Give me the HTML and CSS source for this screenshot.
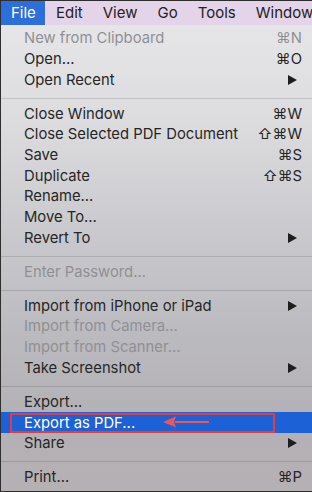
FILE: index.html
```html
<!DOCTYPE html>
<html lang="en">
<head>
	<meta charset="UTF-8">
	<title>File menu</title>
	<link rel="stylesheet" href="styles.css">
</head>
<body>
	<div class="frame">
		<div class="menubar">
			<span class="title on">File</span>
			<span class="title">Edit</span>
			<span class="title">View</span>
			<span class="title">Go</span>
			<span class="title">Tools</span>
			<span class="title">Window</span>
		</div>
		<div class="menu">
			<div class="row off"><span class="label">New from Clipboard</span><span class="key">⌘N</span></div>
			<div class="row"><span class="label">Open...</span><span class="key">⌘O</span></div>
			<div class="row"><span class="label">Open Recent</span><span class="sub"><svg width="9" height="10" viewBox="0 0 9 10"><path d="M0 0L9 5L0 10Z"/></svg></span></div>
			<div class="sep"></div>
			<div class="row"><span class="label">Close Window</span><span class="key">⌘W</span></div>
			<div class="row"><span class="label">Close Selected PDF Document</span><span class="key">⇧⌘W</span></div>
			<div class="row"><span class="label">Save</span><span class="key">⌘S</span></div>
			<div class="row"><span class="label">Duplicate</span><span class="key">⇧⌘S</span></div>
			<div class="row"><span class="label">Rename...</span></div>
			<div class="row"><span class="label">Move To...</span></div>
			<div class="row"><span class="label">Revert To</span><span class="sub"><svg width="9" height="10" viewBox="0 0 9 10"><path d="M0 0L9 5L0 10Z"/></svg></span></div>
			<div class="sep"></div>
			<div class="row off"><span class="label">Enter Password...</span></div>
			<div class="sep"></div>
			<div class="row"><span class="label">Import from iPhone or iPad</span><span class="sub"><svg width="9" height="10" viewBox="0 0 9 10"><path d="M0 0L9 5L0 10Z"/></svg></span></div>
			<div class="row off"><span class="label">Import from Camera...</span></div>
			<div class="row off"><span class="label">Import from Scanner...</span></div>
			<div class="row"><span class="label">Take Screenshot</span><span class="sub"><svg width="9" height="10" viewBox="0 0 9 10"><path d="M0 0L9 5L0 10Z"/></svg></span></div>
			<div class="sep"></div>
			<div class="row"><span class="label">Export...</span></div>
			<div class="row hi">
				<span class="label">Export as PDF...</span>
				<div class="mark"></div>
				<svg class="pointer" width="48" height="12" viewBox="0 0 48 12"><path d="M12 5H46V7H12Z M0 6L13 0.5L11 6L13 11.5Z" fill="#ec5656"/></svg>
			</div>
			<div class="row"><span class="label">Share</span><span class="sub"><svg width="9" height="10" viewBox="0 0 9 10"><path d="M0 0L9 5L0 10Z"/></svg></span></div>
			<div class="sep"></div>
			<div class="row"><span class="label">Print...</span><span class="key">⌘P</span></div>
		</div>
	</div>
</body>
</html>
```
FILE: styles.css
```css
*{
	margin: 0;
	padding: 0;
	box-sizing: border-box;
}
body{
	font-family: Inter, "Liberation Sans", "DejaVu Sans", sans-serif;
	background: #fff;
}
.frame{
	width: 312px;
	height: 492px;
	border: 1px solid #2e2e2e;
	border-right: none;
	overflow: hidden;
	background: linear-gradient(180deg, #e8e8eb 0%, #dcdcdf 25%, #c9c9cd 48%, #bbbabf 68%, #b3b1b6 85%, #b6b0b3 100%);
}
.menubar{
	height: 24px;
	display: flex;
	align-items: center;
	background: #e3d4ea;
	color: #222;
	font-size: 15px;
	white-space: nowrap;
}
.title{
	height: 24px;
	line-height: 24px;
	padding: 0 10px;
}
.title.on{
	background: #2c6fdb;
	color: #fff;
	width: 44px;
	margin-right: 1px;
}
.menu{
	padding-top: 3px;
	font-size: 14.8px;
	color: #262626;
}
.row{
	height: 20.7px;
	display: flex;
	align-items: center;
	padding: 0 10px 0 23px;
	position: relative;
}
.label{
	flex: 1;
}
.off{
	color: #909094;
}
.key{
	font-family: Inter, "DejaVu Sans", sans-serif;
}
.sub{
	display: flex;
	margin-right: 5px;
}
.sub svg{
	fill: #1e1e1e;
}
.sep{
	height: 1px;
	margin: 7.5px 0 4.8px;
	background: rgba(0,0,0,0.12);
}
.hi{
	background: #1d61d6;
	color: #fff;
}
.mark{
	position: absolute;
	left: 9px;
	top: 1px;
	width: 265px;
	height: 20px;
	border: 2px solid #ea3a3f;
}
.pointer{
	position: absolute;
	left: 162px;
	top: 4px;
}
```
